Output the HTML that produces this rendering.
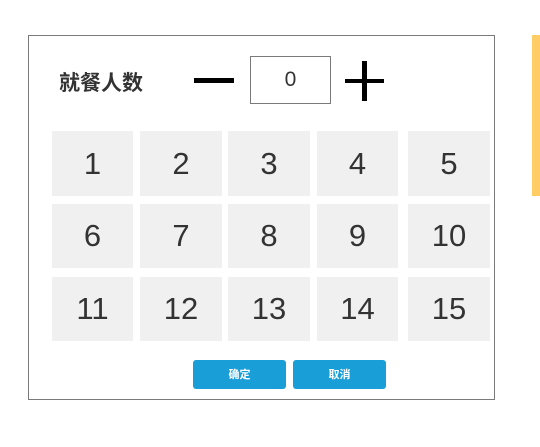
<!DOCTYPE html>
<html><head><meta charset="utf-8"><style>
*{margin:0;padding:0;box-sizing:border-box}
body{width:540px;height:447px;background:#fff;position:relative;overflow:hidden;font-family:"Liberation Sans","Noto Sans CJK SC",sans-serif}
.box{position:absolute;left:28px;top:35px;width:467px;height:365px;border:1px solid #7a7a7a}
.bar{position:absolute;left:532px;top:35px;width:8px;height:161px;background:#ffcc66}
.lbl{position:absolute;left:59px;top:67px;font-size:21px;font-weight:bold;color:#333}
.minus{position:absolute;left:194px;top:78px;width:40px;height:5px;background:#000}
.inp{position:absolute;left:250px;top:56px;width:81px;height:48px;border:1px solid #7a7a7a;text-align:center;line-height:46px;font-size:21px;color:#333}
.ph{position:absolute;left:345px;top:79px;width:39px;height:4px;background:#000}
.pv{position:absolute;left:362px;top:61px;width:5px;height:40px;background:#000}
.c{position:absolute;background:#f0f0f0;color:#333;font-size:31px;text-align:center}
.b{position:absolute;top:360px;width:93px;height:29px;background:#199ed8;border-radius:3px;color:#fff;font-size:11px;font-weight:bold;text-align:center;line-height:31px}
</style></head><body>
<div class="box"></div><div class="bar"></div>
<div class="lbl">就餐人数</div>
<div class="minus"></div>
<div class="inp">0</div>
<div class="ph"></div><div class="pv"></div>
<div id="g"></div>
<div class="b" style="left:193px">确定</div>
<div class="b" style="left:293px">取消</div>
<script>
var xs=[[52,81],[140,82],[228,82],[317,81],[408,82]],ys=[[131,65],[204,64],[277,64]],h='';
for(var r=0;r<3;r++)for(var c=0;c<5;c++){h+='<div class="c" style="left:'+xs[c][0]+'px;top:'+ys[r][0]+'px;width:'+xs[c][1]+'px;height:'+ys[r][1]+'px;line-height:'+ys[r][1]+'px">'+(r*5+c+1)+'</div>';}
document.getElementById('g').innerHTML=h;
</script>
</body></html>
